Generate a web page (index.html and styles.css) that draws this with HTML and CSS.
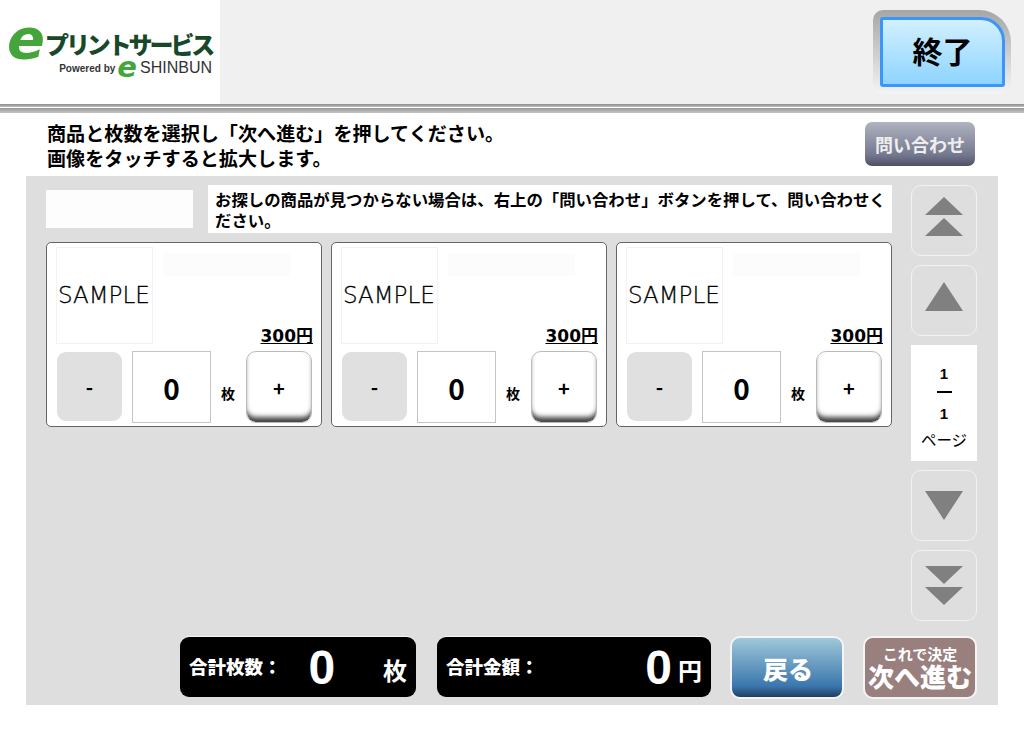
FILE: index.html
```html
<!DOCTYPE html>
<html lang="ja">

<head>
    <meta charset="UTF-8">
    <title>商品選択</title>
    <link rel="stylesheet" href="styles.css">
</head>

<body>
    <header class="top-bar">
        <div class="logo">
            <div class="logo-main"><span class="logo-e">e</span><span class="logo-name">プリントサービス</span></div>
            <div class="logo-sub"><span class="logo-by">Powered by</span><span class="logo-e-small">e</span><span class="logo-shinbun">SHINBUN</span></div>
        </div>
        <div class="end-frame">
            <button class="end-btn">終了</button>
        </div>
    </header>
    <div class="top-line"></div>

    <div class="guide">
        <p>商品と枚数を選択し「次へ進む」を押してください。<br>画像をタッチすると拡大します。</p>
        <button class="contact-btn">問い合わせ</button>
    </div>

    <main class="panel">
        <div class="content">
            <div class="note-row">
                <div class="note-blank"></div>
                <p class="note">お探しの商品が見つからない場合は、右上の「問い合わせ」ボタンを押して、問い合わせください。</p>
            </div>
            <div class="card-row">
                <section class="card">
                    <div class="card-top">
                        <div class="thumb">SAMPLE</div>
                        <div class="card-info">
                            <div class="card-title"></div>
                            <div class="price">300円</div>
                        </div>
                    </div>
                    <div class="qty-row">
                        <button class="minus">-</button>
                        <div class="qty">0</div>
                        <span class="unit">枚</span>
                        <button class="plus">+</button>
                    </div>
                </section>
                <section class="card">
                    <div class="card-top">
                        <div class="thumb">SAMPLE</div>
                        <div class="card-info">
                            <div class="card-title"></div>
                            <div class="price">300円</div>
                        </div>
                    </div>
                    <div class="qty-row">
                        <button class="minus">-</button>
                        <div class="qty">0</div>
                        <span class="unit">枚</span>
                        <button class="plus">+</button>
                    </div>
                </section>
                <section class="card">
                    <div class="card-top">
                        <div class="thumb">SAMPLE</div>
                        <div class="card-info">
                            <div class="card-title"></div>
                            <div class="price">300円</div>
                        </div>
                    </div>
                    <div class="qty-row">
                        <button class="minus">-</button>
                        <div class="qty">0</div>
                        <span class="unit">枚</span>
                        <button class="plus">+</button>
                    </div>
                </section>
            </div>
        </div>

        <aside class="pager">
            <button class="page-btn page-btn-up">
                <svg width="38" height="39" viewBox="0 0 38 39"><polygon points="19,0 38,18 0,18" /><polygon points="19,21 38,39 0,39" /></svg>
            </button>
            <button class="page-btn page-btn-up">
                <svg width="38" height="29" viewBox="0 0 38 29"><polygon points="19,0 38,29 0,29" /></svg>
            </button>
            <div class="page-count">
                <span class="page-num">1</span>
                <span class="page-rule"></span>
                <span class="page-num">1</span>
                <span class="page-label">ページ</span>
            </div>
            <button class="page-btn">
                <svg width="38" height="29" viewBox="0 0 38 29"><polygon points="0,0 38,0 19,29" /></svg>
            </button>
            <button class="page-btn">
                <svg width="38" height="39" viewBox="0 0 38 39"><polygon points="0,0 38,0 19,18" /><polygon points="0,21 38,21 19,39" /></svg>
            </button>
        </aside>

        <div class="bottom-row">
            <div class="total total-count">
                <span class="total-label">合計枚数：</span>
                <span class="total-value">0</span>
                <span class="total-unit">枚</span>
            </div>
            <div class="total total-price">
                <span class="total-label">合計金額：</span>
                <span class="total-value">0</span>
                <span class="total-unit">円</span>
            </div>
            <button class="back-btn">戻る</button>
            <button class="next-btn"><small>これで決定</small>次へ進む</button>
        </div>
    </main>
</body>

</html>
```

FILE: styles.css
```css
* {
    margin: 0;
    padding: 0;
    box-sizing: border-box;
    font-family: "Noto Sans CJK JP", "Noto Sans", sans-serif;
}

html,
body {
    height: 100%;
    background-color: #fff;
}

button {
    border: none;
    cursor: pointer;
}

.top-bar {
    height: 104px;
    background-color: #f0f0f0;
    display: flex;
    justify-content: space-between;
    align-items: center;
    padding-right: 13px;
}

.logo {
    width: 220px;
    height: 104px;
    background-color: #fff;
    padding: 28px 8px 0 9px;
}

.logo-main {
    display: flex;
    align-items: center;
    height: 32px;
}

.logo-e {
    font-family: "DejaVu Sans", sans-serif;
    font-style: italic;
    font-weight: bold;
    font-size: 56px;
    line-height: 32px;
    color: #44a63a;
    width: 40px;
    margin-left: -2px;
    margin-top: -11px;
}

.logo-name {
    font-size: 24px;
    font-weight: 900;
    line-height: 24px;
    letter-spacing: -3.1px;
    color: #17482a;
    white-space: nowrap;
}

.logo-sub {
    display: flex;
    justify-content: flex-end;
    align-items: center;
    height: 16px;
}

.logo-by {
    font-family: "Liberation Sans", sans-serif;
    font-size: 10px;
    font-weight: bold;
    color: #333;
}

.logo-e-small {
    font-family: "DejaVu Sans", sans-serif;
    font-style: italic;
    font-weight: bold;
    font-size: 29px;
    line-height: 16px;
    color: #44a63a;
    margin: -3px 3px 0 2px;
}

.logo-shinbun {
    font-family: "Liberation Sans", sans-serif;
    font-size: 16px;
    line-height: 16px;
    color: #333;
}

.end-frame {
    width: 138px;
    height: 84px;
    padding: 7px 6px 7px 7px;
    border-radius: 10px 32px 12px 10px;
    background: linear-gradient(#a6a6a6, #f4f4f4);
}

.end-btn {
    width: 125px;
    height: 70px;
    border: 3px solid #3a96fb;
    border-radius: 3px 24px 3px 3px;
    background: linear-gradient(#d2f0ff, #8ed4ff);
    padding-bottom: 4px;
    font-size: 30px;
    font-weight: bold;
    color: #000;
}

.top-line {
    height: 9px;
    background: linear-gradient(#8e8e8e, #b8b8b8 30%, #fff 30%, #fff 50%, #9c9c9c 50%, #c4c4c4);
}

.guide {
    height: 63px;
    padding: 8px 49px 0 47px;
    display: flex;
    justify-content: space-between;
    align-items: flex-start;
    font-size: 19.1px;
    font-weight: bold;
    line-height: 25px;
}

.contact-btn {
    width: 110px;
    height: 44px;
    margin-top: 1px;
    border-radius: 7px;
    background: linear-gradient(#b0b3c0, #74788e 75%, #4e5166);
    color: #eee;
    font-size: 18px;
    font-weight: bold;
}

.panel {
    width: 972px;
    height: 529px;
    margin-left: 26px;
    background-color: #dedede;
    padding: 9px 21px 0 20px;
    display: grid;
    grid-template-columns: 846px 66px;
    grid-template-rows: 436px 63px;
    column-gap: 19px;
    row-gap: 15px;
}

.note-row {
    display: flex;
    align-items: center;
    gap: 15px;
}

.note-blank {
    width: 147px;
    height: 38px;
    background-color: #fdfdfd;
}

.note {
    flex: 1;
    height: 48px;
    padding: 4px 4px 0 7px;
    background-color: #fff;
    font-size: 16.4px;
    font-weight: bold;
    line-height: 21px;
}

.card-row {
    display: flex;
    gap: 9px;
    margin-top: 9px;
}

.card {
    width: 276px;
    height: 185px;
    background-color: #fff;
    border: 1px solid #666;
    border-radius: 5px;
    padding: 4px 8px 0 9px;
}

.card-top {
    display: flex;
    gap: 10px;
    height: 104px;
}

.thumb {
    width: 97px;
    height: 97px;
    border: 1px solid #f2f2f2;
    font-family: "DejaVu Sans", sans-serif;
    font-size: 23px;
    font-weight: 200;
    -webkit-text-stroke: 0.3px #000;
    line-height: 95px;
    padding-left: 1px;
    white-space: nowrap;
}

.card-info {
    flex: 1;
    display: flex;
    flex-direction: column;
    padding-top: 6px;
}

.card-title {
    width: 127px;
    height: 23px;
    background-color: #fcfcfc;
}

.price {
    margin-top: auto;
    margin-bottom: 4px;
    text-align: right;
    font-family: "DejaVu Sans", "Noto Sans CJK JP", sans-serif;
    font-size: 17px;
    font-weight: bold;
    line-height: 22px;
    text-decoration: underline;
}

.qty-row {
    display: flex;
    align-items: center;
    margin-left: 1px;
}

.minus {
    width: 65px;
    height: 69px;
    margin-bottom: 2px;
    background-color: #e0e0e0;
    border-radius: 9px;
    font-size: 20px;
    font-weight: bold;
}

.qty {
    width: 79px;
    height: 72px;
    margin-left: 10px;
    border: 1px solid #c4c4c4;
    font-size: 28px;
    font-weight: bold;
    line-height: 72px;
    text-align: center;
}

.unit {
    width: 34px;
    padding-top: 11px;
    font-size: 14px;
    font-weight: bold;
    text-align: center;
}

.plus {
    width: 66px;
    height: 72px;
    margin-left: 1px;
    background-color: #fff;
    border: 1px solid #bbb;
    border-radius: 10px;
    box-shadow: inset 0 -7px 5px -2px #444;
    font-size: 20px;
    font-weight: bold;
}

.pager {
    grid-row: 1;
    grid-column: 2;
    display: flex;
    flex-direction: column;
    gap: 9px;
}

.page-btn {
    width: 66px;
    height: 71px;
    border: 1px solid #f2f2f2;
    border-radius: 10px;
    background-color: #dedede;
    display: flex;
    align-items: center;
    justify-content: center;
}

.page-btn-up {
    padding-bottom: 8px;
}

.page-btn svg {
    fill: #808080;
}

.page-count {
    height: 117px;
    background-color: #fff;
    display: flex;
    flex-direction: column;
    align-items: center;
    padding-top: 18px;
}

.page-num {
    font-family: "Liberation Sans", sans-serif;
    font-size: 15px;
    font-weight: bold;
    line-height: 22px;
}

.page-rule {
    width: 15px;
    height: 2px;
    margin: 6px 0 10px;
    background-color: #000;
}

.page-label {
    font-size: 15.5px;
    line-height: 28px;
}

.bottom-row {
    grid-row: 2;
    grid-column: 1 / 3;
    display: flex;
    align-items: flex-start;
    padding-left: 134px;
}

.total {
    height: 60px;
    margin-top: 1px;
    background-color: #000;
    border-radius: 9px;
    box-shadow: 0 -1px 0 #f4f4f4;
    color: #fff;
    display: flex;
    align-items: center;
    font-weight: bold;
}

.total-count {
    width: 236px;
    padding: 0 9px 0 9px;
}

.total-price {
    width: 274px;
    margin-left: 21px;
    padding: 0 9px 0 9px;
}

.total-label {
    font-size: 18.5px;
    font-weight: 900;
    padding-bottom: 3px;
}

.total-value {
    font-family: "Liberation Sans", sans-serif;
    font-size: 48px;
    font-weight: bold;
    line-height: 60px;
    margin-left: auto;
    padding-top: 1px;
}

.total-count .total-value {
    margin-left: 27px;
}

.total-price .total-value {
    margin-right: 1px;
}

.total-unit {
    font-size: 24px;
    line-height: 30px;
    padding-top: 6px;
    margin-left: 5px;
}

.total-count .total-unit {
    margin-left: auto;
}

.back-btn {
    width: 114px;
    height: 63px;
    margin-left: 19px;
    padding-left: 2px;
    border: 2px solid #f4f4f4;
    border-radius: 10px;
    background: linear-gradient(#a0c8d8, #3a76ad 82%, #1d3e5f);
    color: #fff;
    font-size: 25px;
    font-weight: 900;
    text-shadow: 1px 0 #5a8cc0;
}

.next-btn {
    width: 114px;
    height: 63px;
    margin-left: 19px;
    border: 2px solid #f4f4f4;
    border-radius: 10px;
    background-color: #9a7f7f;
    color: #fff;
    font-size: 26px;
    font-weight: 900;
    line-height: 28px;
    white-space: nowrap;
}

.next-btn small {
    display: block;
    font-size: 15px;
    line-height: 16px;
    font-weight: bold;
}
```
